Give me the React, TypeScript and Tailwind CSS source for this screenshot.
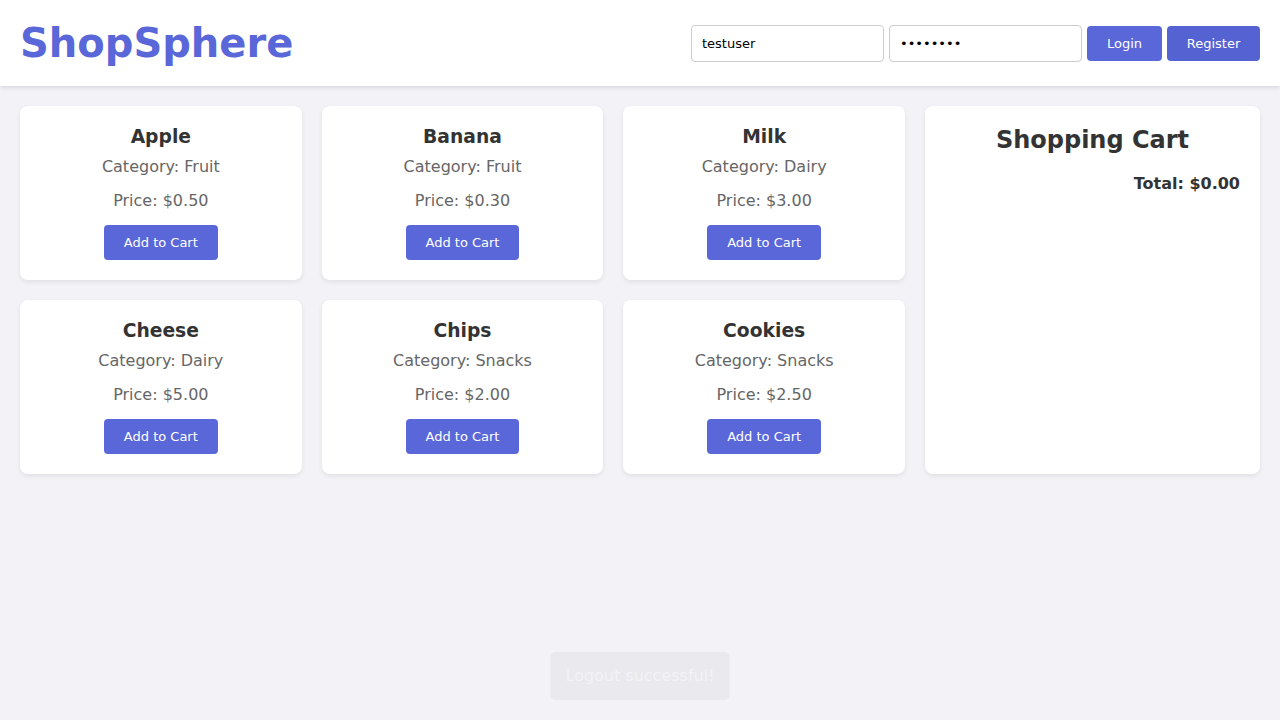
import React from "react";

type Product = {
  name: string;
  category: string;
  price: number;
};

const products: Product[] = [
  { name: "Apple", category: "Fruit", price: 0.5 },
  { name: "Banana", category: "Fruit", price: 0.3 },
  { name: "Milk", category: "Dairy", price: 3 },
  { name: "Cheese", category: "Dairy", price: 5 },
  { name: "Chips", category: "Snacks", price: 2 },
  { name: "Cookies", category: "Snacks", price: 2.5 }
];

function ProductCard({ product }: { product: Product }) {
  return (
    <div className="flex flex-col items-center rounded-lg bg-white p-5 text-center shadow-[0_2px_5px_rgba(0,0,0,0.08)]">
      <h3 className="text-[18.72px] font-bold leading-[22px] text-[#333]">{product.name}</h3>
      <p className="mt-[7px] text-base leading-6 text-[#666]">
        Category: {product.category}
      </p>
      <p className="mt-[10px] text-base leading-6 text-[#666]">
        Price: ${product.price.toFixed(2)}
      </p>
      <button className="mt-3 h-[35px] rounded bg-[#5a67d8] px-5 text-[13px] text-white">
        Add to Cart
      </button>
    </div>
  );
}

export default function App() {
  return (
    <div className="min-h-[720px] bg-[#f3f3f7] font-['DejaVu_Sans',sans-serif]">
      <header className="flex items-center justify-between bg-white px-5 py-5 shadow-[0_2px_4px_rgba(0,0,0,0.1)]">
        <h1 className="text-[40px] font-bold leading-[46px] text-[#5a67d8]">ShopSphere</h1>
        <div className="flex items-center gap-[5px]">
          <input
            readOnly
            value="testuser"
            className="h-[37px] w-[193px] rounded border border-[#ccc] px-[10px] pt-px text-[13px] text-black outline-none"
          />
          <input
            readOnly
            type="password"
            value="password"
            className="h-[37px] w-[193px] rounded border border-[#ccc] px-[10px] pt-px text-[13px] text-black outline-none"
          />
          <button className="h-[35px] w-[75px] rounded bg-[#5a67d8] pt-px text-[13px] text-white">
            Login
          </button>
          <button className="h-[35px] w-[93px] rounded bg-[#5562d2] pt-px text-[13px] text-white">
            Register
          </button>
        </div>
      </header>

      <main className="flex items-stretch gap-5 p-5">
        <div className="grid flex-1 grid-cols-3 gap-5">
          {products.map((p) => (
            <ProductCard key={p.name} product={p} />
          ))}
        </div>
        <aside className="w-[335px] rounded-lg bg-white p-5 shadow-[0_2px_5px_rgba(0,0,0,0.08)]">
          <h2 className="text-center text-2xl font-bold leading-[29px] text-[#333]">
            Shopping Cart
          </h2>
          <p className="mt-[17px] text-right text-base font-bold leading-6 text-[#333]">
            Total: $0.00
          </p>
        </aside>
      </main>

      <div className="fixed bottom-5 left-1/2 -translate-x-1/2 rounded-[5px] bg-[#e9e9ee] px-[15px] py-3 text-base leading-6 text-[#f3f3f7]">
        Logout successful!
      </div>
    </div>
  );
}
